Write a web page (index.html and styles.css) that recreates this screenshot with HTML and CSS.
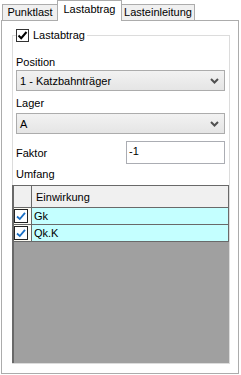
FILE: index.html
```html
<!DOCTYPE html>
<html lang="de">
<head>
    <meta charset="UTF-8">
    <meta name="viewport" content="width=device-width, initial-scale=1.0">
    <title>Lastabtrag</title>
    <link rel="stylesheet" href="styles.css">
</head>
<body>
    <div class="tabs">
        <div class="tab tab-punkt">Punktlast</div>
        <div class="tab tab-active">Lastabtrag</div>
        <div class="tab tab-einl">Lasteinleitung</div>
    </div>

    <div class="panel">
        <fieldset class="group">
            <legend class="group-title">
                <span class="check">
                    <svg width="11" height="11" viewBox="0 0 11 11"><path d="M1.5 5.5 L4.2 8.2 L9.5 2" fill="none" stroke="#000" stroke-width="2"/></svg>
                </span>
                Lastabtrag
            </legend>

            <div class="field-label label-position">Position</div>
            <div class="combo">
                <span>1 - Katzbahnträger</span>
                <svg width="9" height="6" viewBox="0 0 9 6"><path d="M1 1 L4.5 4.5 L8 1" fill="none" stroke="#505050" stroke-width="2"/></svg>
            </div>

            <div class="field-label label-lager">Lager</div>
            <div class="combo">
                <span>A</span>
                <svg width="9" height="6" viewBox="0 0 9 6"><path d="M1 1 L4.5 4.5 L8 1" fill="none" stroke="#505050" stroke-width="2"/></svg>
            </div>

            <div class="factor-row">
                <span>Faktor</span>
                <div class="textbox">-1</div>
            </div>

            <div class="field-label label-umfang">Umfang</div>

            <div class="grid">
                <div class="grid-row grid-head">
                    <div class="row-head"></div>
                    <div class="cell">Einwirkung</div>
                </div>
                <div class="grid-row">
                    <div class="row-head">
                        <span class="row-check">
                            <svg width="12" height="12" viewBox="0 0 12 12"><path d="M2 6.5 L4.8 9 L10 2.8" fill="none" stroke="#1a6fc4" stroke-width="1.8"/></svg>
                        </span>
                    </div>
                    <div class="cell">Gk</div>
                </div>
                <div class="grid-row">
                    <div class="row-head">
                        <span class="row-check">
                            <svg width="12" height="12" viewBox="0 0 12 12"><path d="M2 6.5 L4.8 9 L10 2.8" fill="none" stroke="#1a6fc4" stroke-width="1.8"/></svg>
                        </span>
                    </div>
                    <div class="cell">Qk.K</div>
                </div>
            </div>
        </fieldset>
    </div>
</body>
</html>
```

FILE: styles.css
```css
* {
    margin: 0;
    padding: 0;
    box-sizing: border-box;
}

body {
    font-family: 'Liberation Sans', Arial, sans-serif;
    font-size: 11px;
    color: #000;
    background: #fff;
    width: 241px;
    height: 375px;
    overflow: hidden;
}

/* tab strip */
.tabs {
    display: flex;
    align-items: flex-end;
    height: 20px;
    padding-left: 2px;
}

.tab {
    height: 16px;
    line-height: 14px;
    text-align: center;
    background: #f0f0f0;
    border: 1px solid #acacac;
    border-bottom: none;
}

.tab-punkt {
    width: 55px;
    border-right: none;
}

.tab-active {
    position: relative;
    z-index: 1;
    width: 65px;
    height: 21px;
    margin-bottom: -1px;
    padding-top: 1px;
    background: #fff;
}

.tab-einl {
    width: 73px;
    border-left: none;
}

/* page */
.panel {
    width: 238px;
    height: 354px;
    margin-left: 1px;
    padding: 7px 0 0 10px;
    border: 1px solid #acacac;
    background: #fff;
}

.group {
    width: 218px;
    padding: 0 4px 0 3px;
    border: 1px solid #dcdcdc;
}

.group-title {
    display: flex;
    align-items: center;
    gap: 4px;
    height: 14px;
    margin-left: 0;
    padding: 0 2px 0 0;
    line-height: 14px;
}

.check {
    display: flex;
    align-items: center;
    justify-content: center;
    width: 13px;
    height: 13px;
    border: 1px solid #333;
    background: #fff;
}

.field-label {
    line-height: 13px;
}

.label-position {
    margin: 14px 0 1px;
}

.label-lager {
    margin: 6px 0 3px;
}

.label-umfang {
    margin: 4px 0 4px;
}

.combo {
    display: flex;
    align-items: center;
    justify-content: space-between;
    height: 21px;
    padding: 0 5px 0 3px;
    border: 1px solid #acacac;
    background: linear-gradient(#f2f2f2, #e5e5e5);
}

.factor-row {
    display: flex;
    align-items: center;
    justify-content: space-between;
    margin-top: 7px;
}

.textbox {
    width: 99px;
    height: 23px;
    padding: 3px 0 0 2px;
    line-height: 13px;
    border: 1px solid #abadb3;
    background: #fff;
}

/* data grid */
.grid {
    height: 178px;
    margin: 0 -4px 0 -4px;
    border-left: 2px solid #696969;
    border-top: 1px solid #696969;
    background: #a0a0a0;
}

.grid-row {
    display: grid;
    grid-template-columns: 18px 197px;
    height: 17px;
}

.grid-head {
    height: 22px;
}

.row-head,
.cell {
    border-right: 1px solid #696969;
    border-bottom: 1px solid #696969;
}

.row-head {
    display: flex;
    align-items: center;
    background: #fdfcf4;
}

.cell {
    display: flex;
    align-items: center;
    padding-left: 2px;
    background: #c4ffff;
}

.grid-head .row-head,
.grid-head .cell {
    background: #f0f0f0;
}

.grid-head .cell {
    padding-left: 4px;
}

.row-check {
    display: flex;
    align-items: center;
    justify-content: center;
    width: 14px;
    height: 14px;
    border: 1px solid #222;
    background: #fff;
}
```
